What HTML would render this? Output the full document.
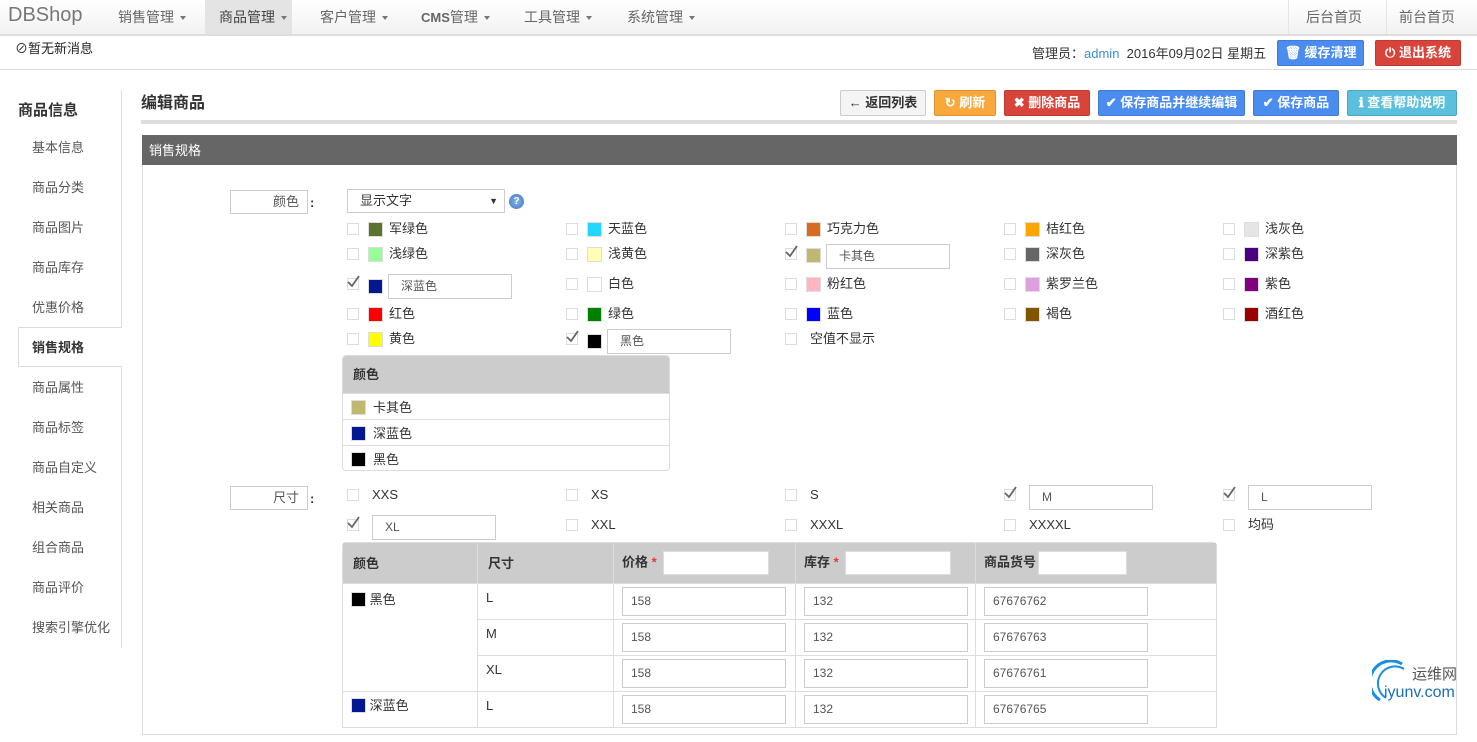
<!DOCTYPE html>
<html><head><meta charset="utf-8">
<style>
*{box-sizing:border-box;margin:0;padding:0}
body{width:1477px;height:709px;overflow:hidden;background:#fff;font-family:"Liberation Sans","Noto Sans CJK SC",sans-serif;font-size:13px;line-height:15px;color:#333;position:relative}
.a{position:absolute;white-space:nowrap}
.nav{position:absolute;left:0;top:0;width:1477px;height:36px;background:linear-gradient(#fff,#f2f2f2);border-bottom:2px solid #ddd}
.ni{position:absolute;top:9px;font-size:14px;line-height:16px;color:#666}
.car{display:inline-block;border-top:4px solid #777;border-left:3.5px solid transparent;border-right:3.5px solid transparent;vertical-align:middle;margin-left:6px}
.btn{position:absolute;height:26px;border-radius:2px;color:#fff;font-weight:bold;font-size:13px;line-height:24px;text-align:center;border:1px solid rgba(0,0,0,.12);white-space:nowrap}
.side{position:absolute;left:32px;font-size:13px;color:#555}
.cb{position:absolute;width:12px;height:12px;border:1px solid #ddd;background:#fff}
.sw{position:absolute;width:15px;height:15px;border:1px solid #ddd}
.tx{position:absolute;font-size:13px;color:#333;white-space:nowrap}
.inp{position:absolute;border:1px solid #ccc;background:#fff;font-size:12px;color:#555;padding-left:12px;white-space:nowrap}
.chk{position:absolute;width:14px;height:14px}
td{border:1px solid #ddd;vertical-align:top;font-size:13px}
.ti{width:164px;height:29px;line-height:27px;padding-left:8px;border:1px solid #ccc;font-size:12px;color:#555}
.tp{padding:3px 8px}
</style></head><body>
<div class="nav">
<div class="a" style="left:8px;top:4px;font-size:20px;line-height:22px;color:#777">DBShop</div>
<div class="a" style="left:205px;top:0;width:87px;height:34px;background:#e4e4e4"></div>
<div class="ni" style="left:118px">销售管理<span class="car"></span></div>
<div class="ni" style="left:219px;color:#444">商品管理<span class="car"></span></div>
<div class="ni" style="left:320px">客户管理<span class="car"></span></div>
<div class="ni" style="left:421px"><b style="font-size:13px">CMS</b>管理<span class="car"></span></div>
<div class="ni" style="left:524px">工具管理<span class="car"></span></div>
<div class="ni" style="left:627px">系统管理<span class="car"></span></div>
<div class="a" style="left:1288px;top:0;width:1px;height:34px;background:#e5e5e5"></div>
<div class="a" style="left:1386px;top:0;width:1px;height:34px;background:#e5e5e5"></div>
<div class="ni" style="left:1306px">后台首页</div>
<div class="ni" style="left:1399px">前台首页</div>
</div>
<div class="a" style="left:0;top:69px;width:1477px;height:1px;background:#ddd"></div>
<div class="a" style="left:15px;top:41px;font-size:13px;color:#222">⊘暂无新消息</div>
<div class="a" style="left:1032px;top:46px;font-size:13px;color:#333">管理员：<span style="color:#3a8fd0">admin</span>&nbsp; 2016年09月02日 星期五</div>
<div class="btn" style="left:1277px;top:40px;width:87px;background:#4a8cf0">🗑 缓存清理</div>
<div class="btn" style="left:1375px;top:40px;width:86px;background:#d9443a">⏻ 退出系统</div>

<div class="a" style="left:18px;top:102px;font-size:15px;line-height:17px;font-weight:bold;color:#333">商品信息</div>
<div class="a" style="left:121px;top:90px;width:1px;height:237px;background:#ddd"></div>
<div class="a" style="left:121px;top:367px;width:1px;height:281px;background:#ddd"></div>
<div class="a" style="left:18px;top:327px;width:104px;height:40px;border:1px solid #ddd;border-right:none;background:#fff"></div>
<div class="side" style="top:140px">基本信息</div>
<div class="side" style="top:180px">商品分类</div>
<div class="side" style="top:220px">商品图片</div>
<div class="side" style="top:260px">商品库存</div>
<div class="side" style="top:300px">优惠价格</div>
<div class="side" style="top:340px;font-weight:bold;color:#333">销售规格</div>
<div class="side" style="top:380px">商品属性</div>
<div class="side" style="top:420px">商品标签</div>
<div class="side" style="top:460px">商品自定义</div>
<div class="side" style="top:500px">相关商品</div>
<div class="side" style="top:540px">组合商品</div>
<div class="side" style="top:580px">商品评价</div>
<div class="side" style="top:620px">搜索引擎优化</div>

<div class="a" style="left:141px;top:95px;font-size:16px;line-height:18px;font-weight:bold;color:#333">编辑商品</div>
<div class="a" style="left:141px;top:120px;width:1316px;height:4px;background:#ddd"></div>
<div class="btn" style="left:840px;top:90px;width:86px;background:#f4f4f4;color:#333;border-color:#ccc">← 返回列表</div>
<div class="btn" style="left:934px;top:90px;width:62px;background:#f9a93b">↻ 刷新</div>
<div class="btn" style="left:1004px;top:90px;width:86px;background:#d9443a">✖ 删除商品</div>
<div class="btn" style="left:1098px;top:90px;width:147px;background:#4a8cf0">✔ 保存商品并继续编辑</div>
<div class="btn" style="left:1253px;top:90px;width:86px;background:#4a8cf0">✔ 保存商品</div>
<div class="btn" style="left:1347px;top:90px;width:110px;background:#5bc0de">ℹ 查看帮助说明</div>

<div class="a" style="left:142px;top:135px;width:1315px;height:600px;border:1px solid #ddd"></div>
<div class="a" style="left:142px;top:135px;width:1315px;height:30px;background:#666;color:#fff;font-size:13px;padding:8px 0 0 7px">销售规格</div>

<div class="inp" style="left:230px;top:190px;width:78px;height:24px;text-align:right;padding-right:8px;font-size:13px;line-height:22px">颜色</div>
<div class="a" style="left:310px;top:195px;font-weight:bold">:</div>
<div class="inp" style="left:347px;top:189px;width:158px;height:24px;line-height:22px;font-size:13px;color:#333">显示文字<span style="position:absolute;right:6px;font-size:9px">▼</span></div>
<div class="a" style="left:509px;top:194px;width:15px;height:15px;border-radius:50%;background:radial-gradient(#8ab4e8,#3b76c4);color:#fff;font-size:10px;text-align:center;line-height:15px;font-weight:bold">?</div>

<!-- color grid -->
<div class="cb" style="left:347px;top:223px"></div><div class="sw" style="left:368px;top:222px;background:#5a732d"></div><div class="tx" style="left:389px;top:221px">军绿色</div>
<div class="cb" style="left:566px;top:223px"></div><div class="sw" style="left:587px;top:222px;background:#22d7fe"></div><div class="tx" style="left:608px;top:221px">天蓝色</div>
<div class="cb" style="left:785px;top:223px"></div><div class="sw" style="left:806px;top:222px;background:#d86a22"></div><div class="tx" style="left:827px;top:221px">巧克力色</div>
<div class="cb" style="left:1004px;top:223px"></div><div class="sw" style="left:1025px;top:222px;background:#ffa500"></div><div class="tx" style="left:1046px;top:221px">桔红色</div>
<div class="cb" style="left:1223px;top:223px"></div><div class="sw" style="left:1244px;top:222px;background:#e5e5e5"></div><div class="tx" style="left:1265px;top:221px">浅灰色</div>

<div class="cb" style="left:347px;top:248px"></div><div class="sw" style="left:368px;top:247px;background:#99fe99"></div><div class="tx" style="left:389px;top:246px">浅绿色</div>
<div class="cb" style="left:566px;top:248px"></div><div class="sw" style="left:587px;top:247px;background:#ffffb5"></div><div class="tx" style="left:608px;top:246px">浅黄色</div>
<div class="cb" style="left:785px;top:248px"></div><svg class="chk" style="left:785px;top:245px" viewBox="0 0 14 14"><path d="M1 7 L5 11 L12 1" stroke="#666" stroke-width="1.8" fill="none"/></svg><div class="sw" style="left:806px;top:248px;background:#bfb86e"></div><div class="inp" style="left:826px;top:244px;width:124px;height:25px;line-height:23px">卡其色</div>
<div class="cb" style="left:1004px;top:248px"></div><div class="sw" style="left:1025px;top:247px;background:#666"></div><div class="tx" style="left:1046px;top:246px">深灰色</div>
<div class="cb" style="left:1223px;top:248px"></div><div class="sw" style="left:1244px;top:247px;background:#4b0081"></div><div class="tx" style="left:1265px;top:246px">深紫色</div>

<div class="cb" style="left:347px;top:278px"></div><svg class="chk" style="left:347px;top:275px" viewBox="0 0 14 14"><path d="M1 7 L5 11 L12 1" stroke="#666" stroke-width="1.8" fill="none"/></svg><div class="sw" style="left:368px;top:279px;background:#031890"></div><div class="inp" style="left:388px;top:274px;width:124px;height:25px;line-height:23px">深蓝色</div>
<div class="cb" style="left:566px;top:278px"></div><div class="sw" style="left:587px;top:277px;background:#fff"></div><div class="tx" style="left:608px;top:276px">白色</div>
<div class="cb" style="left:785px;top:278px"></div><div class="sw" style="left:806px;top:277px;background:#ffb6c1"></div><div class="tx" style="left:827px;top:276px">粉红色</div>
<div class="cb" style="left:1004px;top:278px"></div><div class="sw" style="left:1025px;top:277px;background:#dea0dd"></div><div class="tx" style="left:1046px;top:276px">紫罗兰色</div>
<div class="cb" style="left:1223px;top:278px"></div><div class="sw" style="left:1244px;top:277px;background:#800080"></div><div class="tx" style="left:1265px;top:276px">紫色</div>

<div class="cb" style="left:347px;top:308px"></div><div class="sw" style="left:368px;top:307px;background:#f00"></div><div class="tx" style="left:389px;top:306px">红色</div>
<div class="cb" style="left:566px;top:308px"></div><div class="sw" style="left:587px;top:307px;background:#008000"></div><div class="tx" style="left:608px;top:306px">绿色</div>
<div class="cb" style="left:785px;top:308px"></div><div class="sw" style="left:806px;top:307px;background:#00f"></div><div class="tx" style="left:827px;top:306px">蓝色</div>
<div class="cb" style="left:1004px;top:308px"></div><div class="sw" style="left:1025px;top:307px;background:#7f5500"></div><div class="tx" style="left:1046px;top:306px">褐色</div>
<div class="cb" style="left:1223px;top:308px"></div><div class="sw" style="left:1244px;top:307px;background:#990000"></div><div class="tx" style="left:1265px;top:306px">酒红色</div>

<div class="cb" style="left:347px;top:333px"></div><div class="sw" style="left:368px;top:332px;background:#ff0"></div><div class="tx" style="left:389px;top:331px">黄色</div>
<div class="cb" style="left:566px;top:333px"></div><svg class="chk" style="left:566px;top:330px" viewBox="0 0 14 14"><path d="M1 7 L5 11 L12 1" stroke="#666" stroke-width="1.8" fill="none"/></svg><div class="sw" style="left:587px;top:334px;background:#000"></div><div class="inp" style="left:607px;top:329px;width:124px;height:25px;line-height:23px">黑色</div>
<div class="cb" style="left:785px;top:333px"></div><div class="tx" style="left:810px;top:331px">空值不显示</div>

<!-- small color table -->
<div class="a" style="left:342px;top:355px;width:328px;height:116px;border:1px solid #ddd;border-radius:4px;overflow:hidden">
<div style="height:37px;background:#ccc;font-weight:bold;padding:11px 0 0 10px">颜色</div>
<div style="height:26px;border-top:1px solid #ddd;position:relative"><div class="sw" style="left:8px;top:6px;background:#bfb86e"></div><span style="position:absolute;left:30px;top:6px">卡其色</span></div>
<div style="height:26px;border-top:1px solid #ddd;position:relative"><div class="sw" style="left:8px;top:6px;background:#031890"></div><span style="position:absolute;left:30px;top:6px">深蓝色</span></div>
<div style="height:26px;border-top:1px solid #ddd;position:relative"><div class="sw" style="left:8px;top:6px;background:#000"></div><span style="position:absolute;left:30px;top:6px">黑色</span></div>
</div>

<!-- size -->
<div class="inp" style="left:230px;top:486px;width:78px;height:24px;text-align:right;padding-right:8px;font-size:13px;line-height:22px">尺寸</div>
<div class="a" style="left:310px;top:491px;font-weight:bold">:</div>
<div class="cb" style="left:347px;top:489px"></div><div class="tx" style="left:372px;top:487px">XXS</div>
<div class="cb" style="left:566px;top:489px"></div><div class="tx" style="left:591px;top:487px">XS</div>
<div class="cb" style="left:785px;top:489px"></div><div class="tx" style="left:810px;top:487px">S</div>
<div class="cb" style="left:1004px;top:489px"></div><svg class="chk" style="left:1004px;top:486px" viewBox="0 0 14 14"><path d="M1 7 L5 11 L12 1" stroke="#666" stroke-width="1.8" fill="none"/></svg><div class="inp" style="left:1029px;top:485px;width:124px;height:25px;line-height:23px">M</div>
<div class="cb" style="left:1223px;top:489px"></div><svg class="chk" style="left:1223px;top:486px" viewBox="0 0 14 14"><path d="M1 7 L5 11 L12 1" stroke="#666" stroke-width="1.8" fill="none"/></svg><div class="inp" style="left:1248px;top:485px;width:124px;height:25px;line-height:23px">L</div>
<div class="cb" style="left:347px;top:519px"></div><svg class="chk" style="left:347px;top:516px" viewBox="0 0 14 14"><path d="M1 7 L5 11 L12 1" stroke="#666" stroke-width="1.8" fill="none"/></svg><div class="inp" style="left:372px;top:515px;width:124px;height:25px;line-height:23px">XL</div>
<div class="cb" style="left:566px;top:519px"></div><div class="tx" style="left:591px;top:517px">XXL</div>
<div class="cb" style="left:785px;top:519px"></div><div class="tx" style="left:810px;top:517px">XXXL</div>
<div class="cb" style="left:1004px;top:519px"></div><div class="tx" style="left:1029px;top:517px">XXXXL</div>
<div class="cb" style="left:1223px;top:519px"></div><div class="tx" style="left:1248px;top:517px">均码</div>

<!-- big table -->
<div class="a" style="left:342px;top:542px;width:875px;height:200px;border-radius:4px 4px 0 0;overflow:hidden">
<table style="border-collapse:collapse;width:875px;table-layout:fixed">
<colgroup><col style="width:135px"><col style="width:136px"><col style="width:182px"><col style="width:180px"><col></colgroup>
<tr style="background:#ccc;height:41px"><td style="font-weight:bold;padding:0 10px;vertical-align:middle">颜色</td><td style="font-weight:bold;padding:0 10px;vertical-align:middle">尺寸</td><td style="font-weight:bold;padding:0 8px;vertical-align:middle">价格 <span style="color:#e33">*</span><span style="display:inline-block;width:106px;height:24px;background:#fff;border:1px solid #ddd;vertical-align:middle;margin-left:6px"></span></td><td style="font-weight:bold;padding:0 8px;vertical-align:middle">库存 <span style="color:#e33">*</span><span style="display:inline-block;width:106px;height:24px;background:#fff;border:1px solid #ddd;vertical-align:middle;margin-left:6px"></span></td><td style="font-weight:bold;padding:0 8px;vertical-align:middle">商品货号<span style="display:inline-block;width:89px;height:24px;background:#fff;border:1px solid #ddd;vertical-align:middle;margin-left:2px"></span></td></tr>
<tr style="height:36px"><td rowspan="3" style="padding:8px"><span style="display:inline-block;width:15px;height:15px;background:#000;border:1px solid #ddd;vertical-align:-3px"></span> 黑色</td><td style="padding:6px 8px">L</td><td class="tp"><div class="ti">158</div></td><td class="tp"><div class="ti">132</div></td><td class="tp"><div class="ti">67676762</div></td></tr>
<tr style="height:36px"><td style="padding:6px 8px">M</td><td class="tp"><div class="ti">158</div></td><td class="tp"><div class="ti">132</div></td><td class="tp"><div class="ti">67676763</div></td></tr>
<tr style="height:36px"><td style="padding:6px 8px">XL</td><td class="tp"><div class="ti">158</div></td><td class="tp"><div class="ti">132</div></td><td class="tp"><div class="ti">67676761</div></td></tr>
<tr style="height:36px"><td style="padding:6px 8px"><span style="display:inline-block;width:15px;height:15px;background:#031890;border:1px solid #ddd;vertical-align:-3px"></span> 深蓝色</td><td style="padding:6px 8px">L</td><td class="tp"><div class="ti">158</div></td><td class="tp"><div class="ti">132</div></td><td class="tp"><div class="ti">67676765</div></td></tr>
</table></div>

<!-- watermark -->
<svg class="a" style="left:1372px;top:660px" width="40" height="46" viewBox="0 0 40 46"><path d="M30 4 A20 20 0 0 0 8 40" stroke="#1a8ee0" stroke-width="3" fill="none"/><path d="M32 9 A15 15 0 0 0 14 38" stroke="#1a8ee0" stroke-width="2" fill="none"/></svg>
<div class="a" style="left:1412px;top:666px;font-size:15px;line-height:17px;color:#555">运维网</div>
<div class="a" style="left:1384px;top:684px;font-size:16px;line-height:18px;color:#1a6fc0">iyunv.com</div>
</body></html>
